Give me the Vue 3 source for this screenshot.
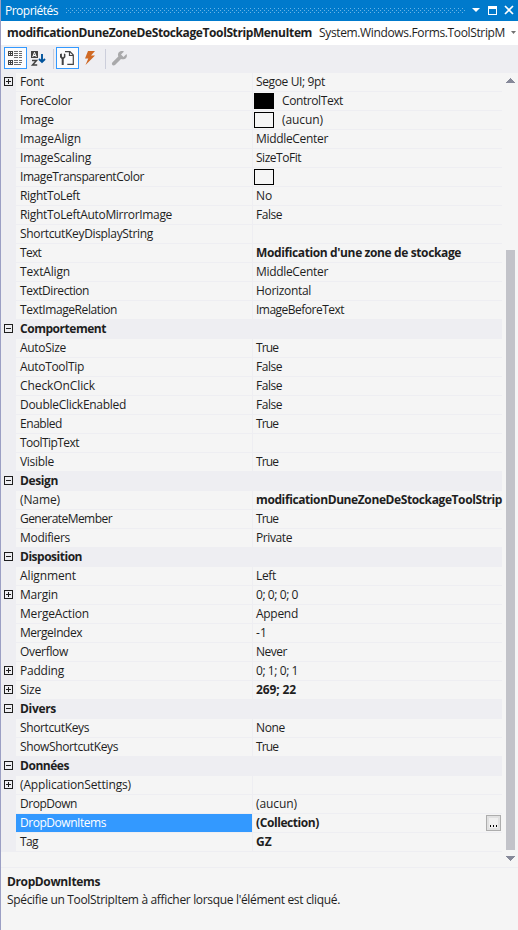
<script setup>
const rows = [
  { n: 'Font', w: 24, v: 'Segoe UI; 9pt', vw: 69, box: '+' },
  { n: 'ForeColor', w: 52, v: 'ControlText', vw: 61, swatch: 'black' },
  { n: 'Image', w: 34, v: '(aucun)', vw: 41, swatch: 'empty' },
  { n: 'ImageAlign', w: 61, v: 'MiddleCenter', vw: 72 },
  { n: 'ImageScaling', w: 71, v: 'SizeToFit', vw: 45 },
  { n: 'ImageTransparentColor', w: 124, v: '', swatch: 'empty' },
  { n: 'RightToLeft', w: 60, v: 'No', vw: 16 },
  { n: 'RightToLeftAutoMirrorImage', w: 152, v: 'False', vw: 26 },
  { n: 'ShortcutKeyDisplayString', w: 133, v: '' },
  { n: 'Text', w: 21, v: 'Modification d\'une zone de stockage', vw: 205, bold: true },
  { n: 'TextAlign', w: 50, v: 'MiddleCenter', vw: 72 },
  { n: 'TextDirection', w: 69, v: 'Horizontal', vw: 55 },
  { n: 'TextImageRelation', w: 97, v: 'ImageBeforeText', vw: 88 },
  { n: 'Comportement', w: 86, cat: true, box: '-' },
  { n: 'AutoSize', w: 46, v: 'True', vw: 22 },
  { n: 'AutoToolTip', w: 64, v: 'False', vw: 26 },
  { n: 'CheckOnClick', w: 75, v: 'False', vw: 26 },
  { n: 'DoubleClickEnabled', w: 106, v: 'False', vw: 26 },
  { n: 'Enabled', w: 42, v: 'True', vw: 22 },
  { n: 'ToolTipText', w: 59, v: '' },
  { n: 'Visible', w: 34, v: 'True', vw: 22 },
  { n: 'Design', w: 38, cat: true, box: '-' },
  { n: '(Name)', w: 40, v: 'modificationDuneZoneDeStockageToolStrip', vw: 246, bold: true },
  { n: 'GenerateMember', w: 92, v: 'True', vw: 22 },
  { n: 'Modifiers', w: 50, v: 'Private', vw: 36 },
  { n: 'Disposition', w: 62, cat: true, box: '-' },
  { n: 'Alignment', w: 56, v: 'Left', vw: 20 },
  { n: 'Margin', w: 38, v: '0; 0; 0; 0', vw: 42, box: '+' },
  { n: 'MergeAction', w: 69, v: 'Append', vw: 42 },
  { n: 'MergeIndex', w: 62, v: '-1', vw: 11 },
  { n: 'Overflow', w: 48, v: 'Never', vw: 31 },
  { n: 'Padding', w: 44, v: '0; 1; 0; 1', vw: 42, box: '+' },
  { n: 'Size', w: 21, v: '269; 22', vw: 40, bold: true, box: '+' },
  { n: 'Divers', w: 36, cat: true, box: '-' },
  { n: 'ShortcutKeys', w: 69, v: 'None', vw: 29 },
  { n: 'ShowShortcutKeys', w: 98, v: 'True', vw: 22 },
  { n: 'Données', w: 49, cat: true, box: '-' },
  { n: '(ApplicationSettings)', w: 111, v: '', box: '+' },
  { n: 'DropDown', w: 57, v: '(aucun)', vw: 41 },
  { n: 'DropDownItems', w: 86, v: '(Collection)', vw: 63, bold: true, sel: true },
  { n: 'Tag', w: 18, v: 'GZ', vw: 16, bold: true }
]

// Tightens or loosens tracking so that each label takes its nominal width.
const vFit = {
  mounted(el, { value }) {
    if (!value) return
    const count = el.textContent.length
    const natural = el.getBoundingClientRect().width
    el.style.letterSpacing = (value - natural) / count + 'px'
  }
}
</script>

<template>
  <div class="panel">
    <header class="title">
      <span v-fit="53" class="t">Propriétés</span>
      <svg class="grip" width="401" height="5">
        <defs>
          <pattern id="dots" width="4" height="4" patternUnits="userSpaceOnUse">
            <rect width="1" height="1" fill="#69b3e5" />
            <rect x="2" y="2" width="1" height="1" fill="#69b3e5" />
          </pattern>
        </defs>
        <rect width="401" height="5" fill="url(#dots)" />
      </svg>
      <svg class="winbtns" width="46" height="21" fill="#fff">
        <path d="M0 8h8l-4 4z" />
        <path d="M16 6h9v9h-9zM17 9v5h7v-5z" fill-rule="evenodd" />
        <path d="M33 6l8 8M41 6l-8 8" stroke="#fff" stroke-width="1.7" />
      </svg>
    </header>

    <div class="object">
      <b v-fit="305" class="t">modificationDuneZoneDeStockageToolStripMenuItem</b>
      <span v-fit="186" class="t type">System.Windows.Forms.ToolStripM</span>
      <svg class="drop" width="6" height="4"><path d="M0 0h5l-2.5 3z" fill="#717171" /></svg>
    </div>

    <div class="tools">
      <svg width="140" height="27" shape-rendering="crispEdges">
        <g fill="#fcfcfd" stroke="#3399ff">
          <path d="M3.500 2.500h22v21h-22zM55.500 2.500h22v21h-22z" />
        </g>
        <g fill="none" stroke="#424242">
          <path d="M7.500 6.500h4v4h-4zM7.500 15.500h4v4h-4zM8 8.500h3M9.500 7v3M8 17.500h3M9.500 16v3" />
          <path stroke="#6a6a6a" d="M13 6.500h4M13 8.500h4M13 10.500h4M18 6.500h3M18 8.500h3M18 10.500h3M13 12.500h4M18 12.500h3M13 15.500h4M13 17.500h4M13 19.500h7M18 15.500h3M18 17.500h3" />
        </g>
        <g shape-rendering="geometricPrecision">
          <path d="M30 6h7v7h-7z" fill="#424242" />
          <path d="M31.700 12l1.800-4.700 1.800 4.700M32.200 10.500h2.600" fill="none" stroke="#fff" />
          <path d="M31 15.500h4.500l-4 4.500h4.700" fill="none" stroke="#424242" stroke-width="1.500" />
          <path d="M41 9v8M38 14l3 3 3-3" fill="none" stroke="#00539c" stroke-width="1.900" />
          <path d="M64 6.700h5l3.300 3.300v9.300h-6M68.500 7v3.500H72" fill="none" stroke="#424242" stroke-width="1.200" />
          <path d="M59 9v3.200l1.700 1.800V20h2v-6l1.700-1.800V9l-1.500-.5v3l-1 1-1-1v-3z" fill="#424242" />
          <path d="M87 6h7l-4 4.500h4L84.500 20l2.800-6.500H84z" fill="#ca5100" opacity=".85" />
          <path d="M125.500 9l-3 3-2.500-2.500 3-3c-4-1.500-7 1.500-5.700 5l-6 6c-1.500 2 1 4 2.700 2.600l6-6c4 1 7-1.500 5.500-5.100z" fill="#a9a9ab" />
        </g>
        <path d="M52.500 4v20M104.500 4v20" stroke="#ccceDB" />
      </svg>
    </div>

    <main class="grid">
      <div class="list">
        <div v-for="(r, i) in rows" :key="i" class="row" :class="{ cat: r.cat, sel: r.sel }">
          <div class="gutter">
            <svg v-if="r.box" width="9" height="9" fill="none" stroke="#1e1e1e" shape-rendering="crispEdges">
              <rect x=".5" y=".5" width="8" height="8" />
              <path d="M2 4.500h5" />
              <path v-if="r.box === '+'" d="M4.500 2v5" />
            </svg>
          </div>
          <div class="name"><span v-fit="r.w" class="t">{{ r.n }}</span></div>
          <div v-if="!r.cat" class="value" :class="{ bold: r.bold }">
            <i v-if="r.swatch" class="swatch" :class="r.swatch"></i>
            <span v-if="r.v" v-fit="r.vw" class="t">{{ r.v }}</span>
            <button v-if="r.sel" class="more"><i></i><i></i><i></i></button>
          </div>
        </div>
      </div>
      <div class="scroll">
        <svg width="10" height="5" shape-rendering="crispEdges"><path d="M0 5L5 0l5 5z" fill="#868999" /></svg>
        <div class="track"><div class="thumb"></div></div>
        <svg width="10" height="5" shape-rendering="crispEdges"><path d="M0 0h10L5 5z" fill="#868999" /></svg>
      </div>
    </main>

    <footer class="help">
      <div><b v-fit="93" class="t">DropDownItems</b></div>
      <div><span v-fit="333" class="t">Spécifie un ToolStripItem à afficher lorsque l'élément est cliqué.</span></div>
    </footer>
  </div>
</template>

<style>
body { margin: 0; background: #f5f5f5; }
</style>

<style scoped>
.panel {
  box-sizing: border-box;
  width: 518px;
  height: 930px;
  overflow: hidden;
  border-left: 1px solid #9b9fc4;
  background: #f5f5f5;
  color: #1e1e1e;
  font: 12px/18px "Segoe UI", "Open Sans", "Noto Sans", sans-serif;
}
.t { display: inline-block; white-space: pre; flex: none; }
.title {
  display: flex;
  align-items: center;
  height: 21px;
  padding-left: 4px;
  background: #007acc;
  color: #fff;
}
.grip { margin-left: 8px; }
.winbtns { margin-left: 6px; flex: none; }
.object {
  display: flex;
  align-items: center;
  height: 24px;
  padding-left: 6px;
  background: #fff;
}
.type { margin-left: 7px; }
.drop { margin-left: 6px; flex: none; }
.tools { height: 28px; background: #eeeef2; }
.tools svg { display: block; }
.grid {
  display: flex;
  height: 794px;
  border-bottom: 1px solid #eeeef2;
}
.list { width: 501px; flex: none; }
.row { display: flex; height: 19px; }
.gutter {
  display: flex;
  align-items: flex-start;
  width: 15px;
  box-sizing: border-box;
  padding: 4px 0 0 3px;
  background: #eeeef2;
  flex: none;
}
.name, .value {
  box-sizing: border-box;
  padding-left: 4px;
  border-bottom: 1px solid #eeeef2;
}
.name { width: 237px; flex: none; border-right: 1px solid #eeeef2; }
.value {
  display: flex;
  flex: 1;
  min-width: 0;
  padding-left: 3px;
}
.cat { background: #eeeef2; font-weight: 700; }
.bold { font-weight: 700; }
.sel .name { background: #3399ff; background-clip: padding-box; color: #fff; }
.swatch {
  box-sizing: border-box;
  width: 20px;
  height: 16px;
  margin: 1px 8px 0 -2px;
  border: 1px solid #000;
  flex: none;
}
.black { background: #000; }
.more {
  display: flex;
  justify-content: center;
  align-items: flex-end;
  gap: 2px;
  box-sizing: border-box;
  width: 15px;
  height: 16px;
  margin: 1px 1px 0 auto;
  padding: 0 0 3px;
  border: 1px solid #adadad;
  background: #f0f0f0;
  box-shadow: inset 0 0 0 2px #e1e1e1;
}
.more i { width: 1px; height: 2px; background: #000; }
.scroll {
  display: flex;
  flex-direction: column;
  align-items: center;
  width: 16px;
  padding-top: 5px;
}
.scroll svg { display: block; flex: none; }
.track { display: flow-root; width: 9px; height: 773px; }
.thumb { height: 600px; margin-top: 167px; background: #c2c3c9; }
.help { padding: 5px 0 0 6px; }
.help div { height: 18px; }
</style>
